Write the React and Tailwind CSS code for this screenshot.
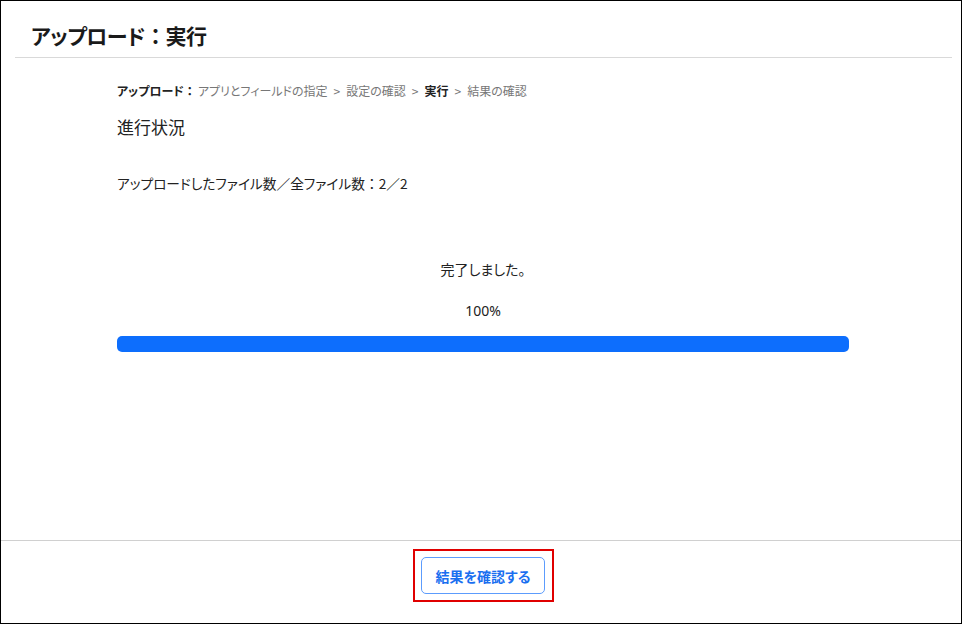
export default function App() {
  const font = { fontFamily: '"Noto Sans CJK JP", "Noto Sans", sans-serif', fontFeatureSettings: '"palt"' };
  const colon = { fontFeatureSettings: 'normal' };
  return (
    <div className="w-[962px] h-[624px] bg-white border border-black flex flex-col text-[#212529]" style={font}>
      <div className="ml-[14px] mr-[9px] border-b border-[#d9d9d9] h-[57px] flex items-center pl-[16px] pt-[13px]">
        <h1 className="text-[21px] font-bold tracking-[-0.5px] leading-none text-[#1a1a1a]">アップロード<span style={colon}>：</span>実行</h1>
      </div>
      <div className="flex-1 pl-[116px] pr-[112px]">
        <div className="mt-[27px] text-[12px] leading-none flex items-center text-[#777]">
          <span className="font-bold text-[#222]">アップロード<span style={colon}>：</span></span>
          <span className="ml-[2px]">アプリとフィールドの指定</span>
          <span className="mx-[6px]">&gt;</span>
          <span>設定の確認</span>
          <span className="mx-[6px]">&gt;</span>
          <span className="font-bold text-[#222]">実行</span>
          <span className="mx-[6px]">&gt;</span>
          <span>結果の確認</span>
        </div>
        <div className="mt-[21px] text-[17px] leading-none text-[#222]">進行状況</div>
        <div className="mt-[42px] text-[13.7px] leading-none text-[#222]">アップロードしたファイル数／全ファイル数<span style={colon}>：</span>2／2</div>
        <div className="mt-[71px] text-center text-[14px] leading-none text-[#222]">完了しました。</div>
        <div className="mt-[28px] text-center text-[14px] leading-none text-[#222]" style={{ fontFamily: '"Noto Sans", sans-serif' }}>100%</div>
        <div className="mt-[18px] h-[16px] rounded-[5px] bg-[#0d6efd]" />
      </div>
      <div className="border-t border-[#d0d0d0] h-[83px] flex justify-center pl-[4px] pt-[8px]">
        <div className="border-2 border-[#e00000] w-[141px] h-[53px] flex items-center justify-center">
          <button className="w-[124px] h-[37px] border border-[#5c9cfd] rounded-[5px] text-[#1a6ff0] font-bold text-[14px] leading-none bg-white">結果を確認する</button>
        </div>
      </div>
    </div>
  );
}
